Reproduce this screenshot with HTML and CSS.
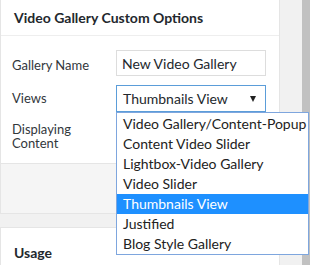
FILE: index.html
```html
<!DOCTYPE html>
<html lang="en">
  <head>
    <meta charset="UTF-8" />
    <meta name="viewport" content="width=device-width, initial-scale=1.0" />
    <title>Video Gallery Custom Options</title>
    <link rel="stylesheet" href="styles.css">
  </head>
  <body>
    <div class="screen">
      <div class="main">
        <div class="panel">
          <div class="panel-head">Video Gallery Custom Options</div>
          <div class="panel-body">
            <div class="row row-name">
              <label class="label">Gallery Name</label>
              <div class="field">New Video Gallery</div>
            </div>
            <div class="row row-views">
              <label class="label">Views</label>
              <div class="select-wrap">
                <div class="select">
                  <span>Thumbnails View</span>
                  <span class="arrow"></span>
                </div>
                <ul class="options">
                  <li>Video Gallery/Content-Popup</li>
                  <li>Content Video Slider</li>
                  <li>Lightbox-Video Gallery</li>
                  <li>Video Slider</li>
                  <li class="selected">Thumbnails View</li>
                  <li>Justified</li>
                  <li>Blog Style Gallery</li>
                </ul>
              </div>
            </div>
            <div class="row row-content">
              <label class="label">Displaying<br />Content</label>
            </div>
          </div>
          <div class="panel-foot"></div>
        </div>

        <div class="panel panel-usage">
          <div class="panel-head">Usage</div>
        </div>
      </div>
      <div class="scrollbar"></div>
    </div>
  </body>
</html>
```

FILE: styles.css
```css
:root {
  --page-bg: #f1f1f1;
  --border-color: #e5e5e5;
  --text-color: #32373c;
  --focus-color: #5b9dd9;
  --highlight: #1e90ff;
}

body {
  font-family: Lato, "Open Sans", sans-serif;
  margin: 0;
  background-color: var(--page-bg);
  color: var(--text-color);
  overflow: hidden;
}

.screen {
  display: flex;
  justify-content: space-between;
  height: 265px;
}

.main {
  width: 280px;
}

.scrollbar {
  width: 8px;
  background-color: #c1c1c1;
}

.panel {
  background-color: white;
  border: 1px solid var(--border-color);
  border-top: none;
}

.panel-head {
  height: 35px;
  padding: 0 13px;
  display: flex;
  align-items: center;
  font-size: 14px;
  font-weight: 700;
  color: #23282d;
  border-bottom: 1px solid #eeeeee;
}

.panel-body {
  height: 113px;
  padding: 14px 0 0 11px;
}

.row {
  display: grid;
  grid-template-columns: 104px 150px;
  align-items: center;
}

.label {
  font-size: 13px;
  line-height: 13px;
}

.row-name {
  height: 26px;
  margin-bottom: 9px;
}

.row-name .label {
  padding-top: 4px;
}

.row-views {
  height: 27px;
}

.row-content {
  margin-top: 10px;
}

.row-content .label {
  line-height: 14px;
}

.field,
.select {
  box-sizing: border-box;
  width: 150px;
  font-size: 14px;
  color: #23282d;
  background-color: white;
  padding: 0 5px;
  display: flex;
  align-items: center;
}

.field {
  height: 26px;
  border: 1px solid #dddddd;
}

.select-wrap {
  position: relative;
}

.select {
  height: 27px;
  padding-left: 6px;
  justify-content: space-between;
  border: 1px solid var(--focus-color);
}

.arrow {
  width: 0;
  height: 0;
  margin-right: 4px;
  border-left: 3.5px solid transparent;
  border-right: 3.5px solid transparent;
  border-top: 6px solid #222;
}

.options {
  position: absolute;
  top: 27px;
  left: 0;
  width: 193px;
  box-sizing: border-box;
  margin: 0;
  padding: 1px 0 0;
  list-style: none;
  background-color: white;
  border: 1px solid #7ea6de;
  font-size: 14px;
  color: #222;
}

.options li {
  height: 20px;
  line-height: 20px;
  padding-left: 6px;
  white-space: nowrap;
}

.options .selected {
  background-color: var(--highlight);
  color: white;
}

.panel-foot {
  height: 49px;
  background-color: #f5f5f5;
  border-top: 1px solid var(--border-color);
}

.panel-usage {
  margin-top: 13px;
  border-top: 1px solid var(--border-color);
  border-bottom: none;
}

.panel-usage .panel-head {
  height: 48px;
  border-bottom: none;
}
```
